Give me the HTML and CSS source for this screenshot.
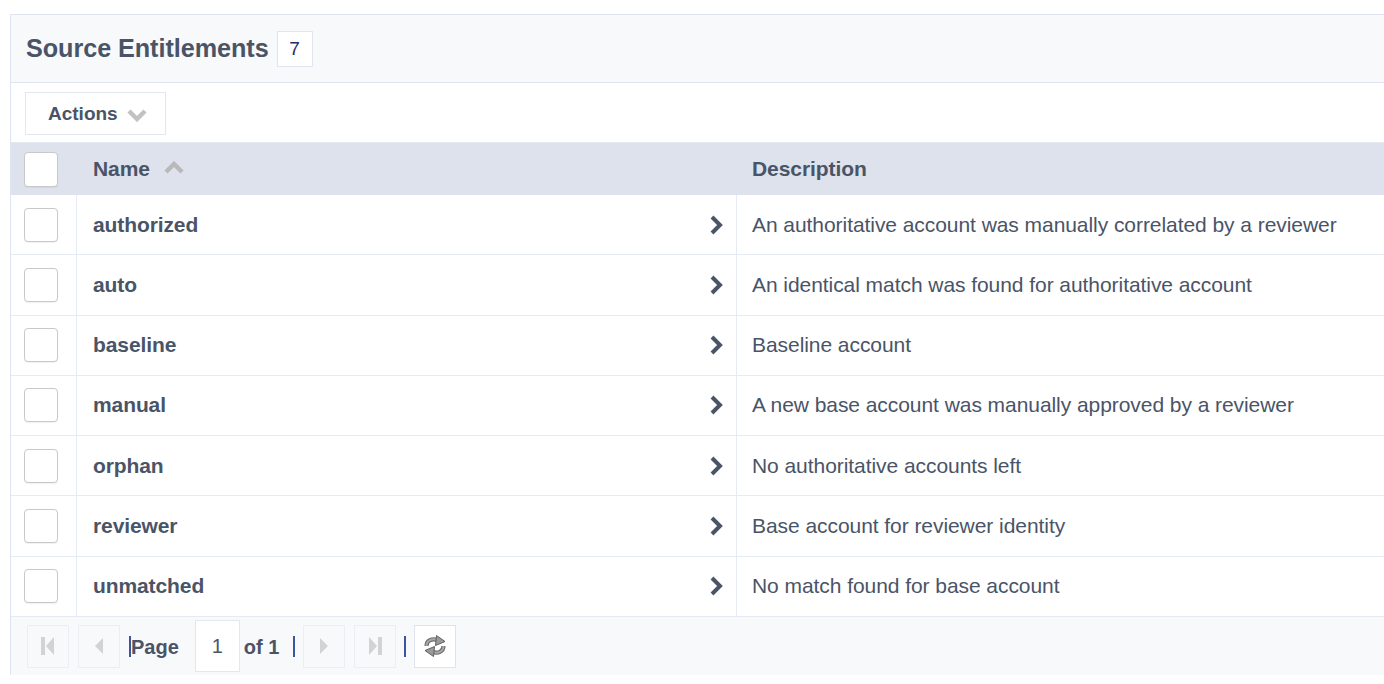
FILE: index.html
```html
<!DOCTYPE html>
<html>
<head>
<meta charset="utf-8">
<link rel="stylesheet" href="styles.css">
</head>
<body>
<div class="panel">
  <div class="panel-header">
    <h1 class="title">Source Entitlements</h1>
    <span class="count">7</span>
  </div>
  <div class="toolbar">
    <button class="actions-btn">Actions
      <svg class="chev-down" width="20" height="14" viewBox="0 0 20 14"><polyline points="2,3 10,11 18,3" fill="none" stroke="#c2c2c2" stroke-width="4.5"/></svg>
    </button>
  </div>
  <div class="grid">
    <div class="grid-head">
      <div class="cell-check"><span class="checkbox"></span></div>
      <div class="cell-name head-name">Name
        <svg class="sort-up" width="20" height="14" viewBox="0 0 20 14"><polyline points="2,11 10,3 18,11" fill="none" stroke="#b9b9b9" stroke-width="4.5"/></svg>
      </div>
      <div class="cell-desc">Description</div>
    </div>
    <div class="grid-row">
      <div class="cell-check"><span class="checkbox"></span></div>
      <div class="cell-name"><span>authorized</span><svg class="go" width="14" height="20" viewBox="0 0 14 20"><polyline points="3,2 11,10 3,18" fill="none" stroke="#4a5467" stroke-width="4"/></svg></div>
      <div class="cell-desc">An authoritative account was manually correlated by a reviewer</div>
    </div>
    <div class="grid-row">
      <div class="cell-check"><span class="checkbox"></span></div>
      <div class="cell-name"><span>auto</span><svg class="go" width="14" height="20" viewBox="0 0 14 20"><polyline points="3,2 11,10 3,18" fill="none" stroke="#4a5467" stroke-width="4"/></svg></div>
      <div class="cell-desc">An identical match was found for authoritative account</div>
    </div>
    <div class="grid-row">
      <div class="cell-check"><span class="checkbox"></span></div>
      <div class="cell-name"><span>baseline</span><svg class="go" width="14" height="20" viewBox="0 0 14 20"><polyline points="3,2 11,10 3,18" fill="none" stroke="#4a5467" stroke-width="4"/></svg></div>
      <div class="cell-desc">Baseline account</div>
    </div>
    <div class="grid-row">
      <div class="cell-check"><span class="checkbox"></span></div>
      <div class="cell-name"><span>manual</span><svg class="go" width="14" height="20" viewBox="0 0 14 20"><polyline points="3,2 11,10 3,18" fill="none" stroke="#4a5467" stroke-width="4"/></svg></div>
      <div class="cell-desc">A new base account was manually approved by a reviewer</div>
    </div>
    <div class="grid-row">
      <div class="cell-check"><span class="checkbox"></span></div>
      <div class="cell-name"><span>orphan</span><svg class="go" width="14" height="20" viewBox="0 0 14 20"><polyline points="3,2 11,10 3,18" fill="none" stroke="#4a5467" stroke-width="4"/></svg></div>
      <div class="cell-desc">No authoritative accounts left</div>
    </div>
    <div class="grid-row">
      <div class="cell-check"><span class="checkbox"></span></div>
      <div class="cell-name"><span>reviewer</span><svg class="go" width="14" height="20" viewBox="0 0 14 20"><polyline points="3,2 11,10 3,18" fill="none" stroke="#4a5467" stroke-width="4"/></svg></div>
      <div class="cell-desc">Base account for reviewer identity</div>
    </div>
    <div class="grid-row">
      <div class="cell-check"><span class="checkbox"></span></div>
      <div class="cell-name"><span>unmatched</span><svg class="go" width="14" height="20" viewBox="0 0 14 20"><polyline points="3,2 11,10 3,18" fill="none" stroke="#4a5467" stroke-width="4"/></svg></div>
      <div class="cell-desc">No match found for base account</div>
    </div>
  </div>
  <div class="pager">
    <span class="pbtn">
      <svg width="16" height="20" viewBox="0 0 16 20"><rect x="1" y="1" width="4" height="18" fill="#d3d3d3"/><polygon points="14,1 6,10 14,19" fill="#d3d3d3"/></svg>
    </span>
    <span class="pbtn">
      <svg width="10" height="20" viewBox="0 0 10 20"><polygon points="9,2 1,10 9,18" fill="#d3d3d3"/></svg>
    </span>
    <span class="sep sep-page"></span>
    <span class="plabel">Page</span>
    <span class="pinput">1</span>
    <span class="plabel">of 1</span>
    <span class="sep sep-gap"></span>
    <span class="pbtn">
      <svg width="10" height="20" viewBox="0 0 10 20"><polygon points="1,2 9,10 1,18" fill="#d3d3d3"/></svg>
    </span>
    <span class="pbtn">
      <svg width="16" height="20" viewBox="0 0 16 20"><polygon points="2,1 10,10 2,19" fill="#d3d3d3"/><rect x="11" y="1" width="4" height="18" fill="#d3d3d3"/></svg>
    </span>
    <span class="sep sep-last"></span>
    <span class="pbtn refresh">
      <svg width="26" height="26" viewBox="0 0 26 26">
        <path d="M4.5 13 C4.5 7.5 10 5 16 7.2" fill="none" stroke="#6d6d6d" stroke-width="4.2"/>
        <path d="M4.5 13 C4.5 7.5 10 5 16 7.2" fill="none" stroke="#a9a9a9" stroke-width="2"/>
        <polygon points="14.5,2.5 23,8.5 13.5,12.5" fill="#9a9a9a" stroke="#5f5f5f" stroke-width="1"/>
        <path d="M21.5 13 C21.5 18.5 16 21 10 18.8" fill="none" stroke="#6d6d6d" stroke-width="4.2"/>
        <path d="M21.5 13 C21.5 18.5 16 21 10 18.8" fill="none" stroke="#a9a9a9" stroke-width="2"/>
        <polygon points="11.5,23.5 3,17.5 12.5,13.5" fill="#9a9a9a" stroke="#5f5f5f" stroke-width="1"/>
      </svg>
    </span>
  </div>
</div>
</body>
</html>
```
FILE: styles.css
```css
html, body {
  margin: 0;
  padding: 0;
  background: #ffffff;
  font-family: "Liberation Sans", Arial, sans-serif;
  color: #4a5467;
  overflow: hidden;
}

.panel {
  margin: 14px 0 0 10px;
  border-top: 1px solid #dfe4f0;
  border-left: 1px solid #dfe4f0;
  height: 660px;
  display: flex;
  flex-direction: column;
}

.panel-header {
  height: 68px;
  flex: none;
  box-sizing: border-box;
  background: #f8f9fb;
  border-bottom: 1px solid #dfe4f0;
  display: flex;
  align-items: center;
  padding-left: 15px;
}

.title {
  margin: 0;
  font-size: 25.2px;
  font-weight: bold;
  color: #4a5467;
  letter-spacing: -0.05px;
}

.count {
  margin-left: 8px;
  width: 34px;
  height: 34px;
  margin-top: 1px;
  border: 1px solid #e1e5ee;
  background: #ffffff;
  display: flex;
  align-items: center;
  justify-content: center;
  font-size: 19px;
  color: #1f2d6b;
}

.toolbar {
  height: 60px;
  flex: none;
  border-bottom: 1px solid #e4e8f1;
  padding: 9px 0 0 14px;
  box-sizing: border-box;
  background: #fff;
}

.actions-btn {
  width: 141px;
  height: 43px;
  border: 1px solid #e3e7f0;
  background: #ffffff;
  font-family: inherit;
  font-size: 19px;
  font-weight: bold;
  color: #4a5467;
  display: flex;
  align-items: center;
  padding: 0 0 0 22px;
  box-sizing: border-box;
  margin: 0;
}

.chev-down {
  margin-left: 9px;
  margin-top: 2px;
}

.grid {
  flex: none;
}

.grid-head {
  height: 52px;
  background: #dee2ec;
  display: flex;
  align-items: center;
  font-size: 21px;
  font-weight: bold;
}

.grid-row {
  height: 60.29px;
  box-sizing: border-box;
  border-bottom: 1px solid #e6eaf2;
  display: flex;
  font-size: 21px;
  background: #fff;
}

.cell-check {
  width: 65px;
  flex: none;
  height: 100%;
  display: flex;
  align-items: center;
  padding-left: 13px;
  box-sizing: border-box;
}

.grid-row .cell-check {
  border-right: 1px solid #e6eaf2;
  width: 66px;
}

.checkbox {
  width: 34px;
  height: 34px;
  box-sizing: border-box;
  border: 1px solid #c9c9c9;
  border-radius: 4px;
  background: #fff;
  box-shadow: 0 1px 1px rgba(0,0,0,0.06);
}

.grid-head .checkbox {
  height: 35px;
  margin-top: 1px;
}

.cell-name {
  width: 660px;
  flex: none;
  height: 100%;
  display: flex;
  align-items: center;
  justify-content: space-between;
  padding: 0 13px 0 16px;
  box-sizing: border-box;
  font-weight: bold;
  letter-spacing: -0.1px;
}

.grid-head .cell-name {
  width: 660px;
  margin-left: 1px;
  justify-content: flex-start;
}

.sort-up {
  margin-left: 14px;
  margin-top: -3px;
}

.grid-row .cell-name {
  border-right: 1px solid #e6eaf2;
}

.cell-desc {
  flex: 1;
  height: 100%;
  display: flex;
  align-items: center;
  padding-left: 15px;
  white-space: nowrap;
  letter-spacing: -0.06px;
}

.pager {
  flex: 1;
  box-sizing: border-box;
  background: #f8f9fb;
  display: flex;
  align-items: center;
  padding-left: 16px;
  padding-top: 1px;
}

.pbtn {
  width: 42px;
  height: 43px;
  box-sizing: border-box;
  border: 1px solid #eceef3;
  background: #f8f9fb;
  display: flex;
  align-items: center;
  justify-content: center;
  margin-right: 9px;
}

.pbtn.refresh {
  background: #ffffff;
  border: 1px solid #dfe3ec;
  margin-right: 0;
}

.sep {
  width: 2px;
  height: 21px;
  background: #3c55a0;
}

.sep-page {
  margin-right: 0;
}

.sep-gap {
  margin-left: 14px;
  margin-right: 8px;
}

.sep-last {
  margin-left: -1px;
  margin-right: 8px;
}

.plabel {
  font-size: 20px;
  font-weight: bold;
  color: #4a5467;
  padding-top: 3px;
}

.pinput {
  width: 45px;
  height: 52px;
  box-sizing: border-box;
  border: 1px solid #e3e7ef;
  background: #ffffff;
  display: flex;
  align-items: center;
  justify-content: center;
  font-size: 20px;
  margin: 0 4px 0 16px;
  color: #4a5467;
}
```
